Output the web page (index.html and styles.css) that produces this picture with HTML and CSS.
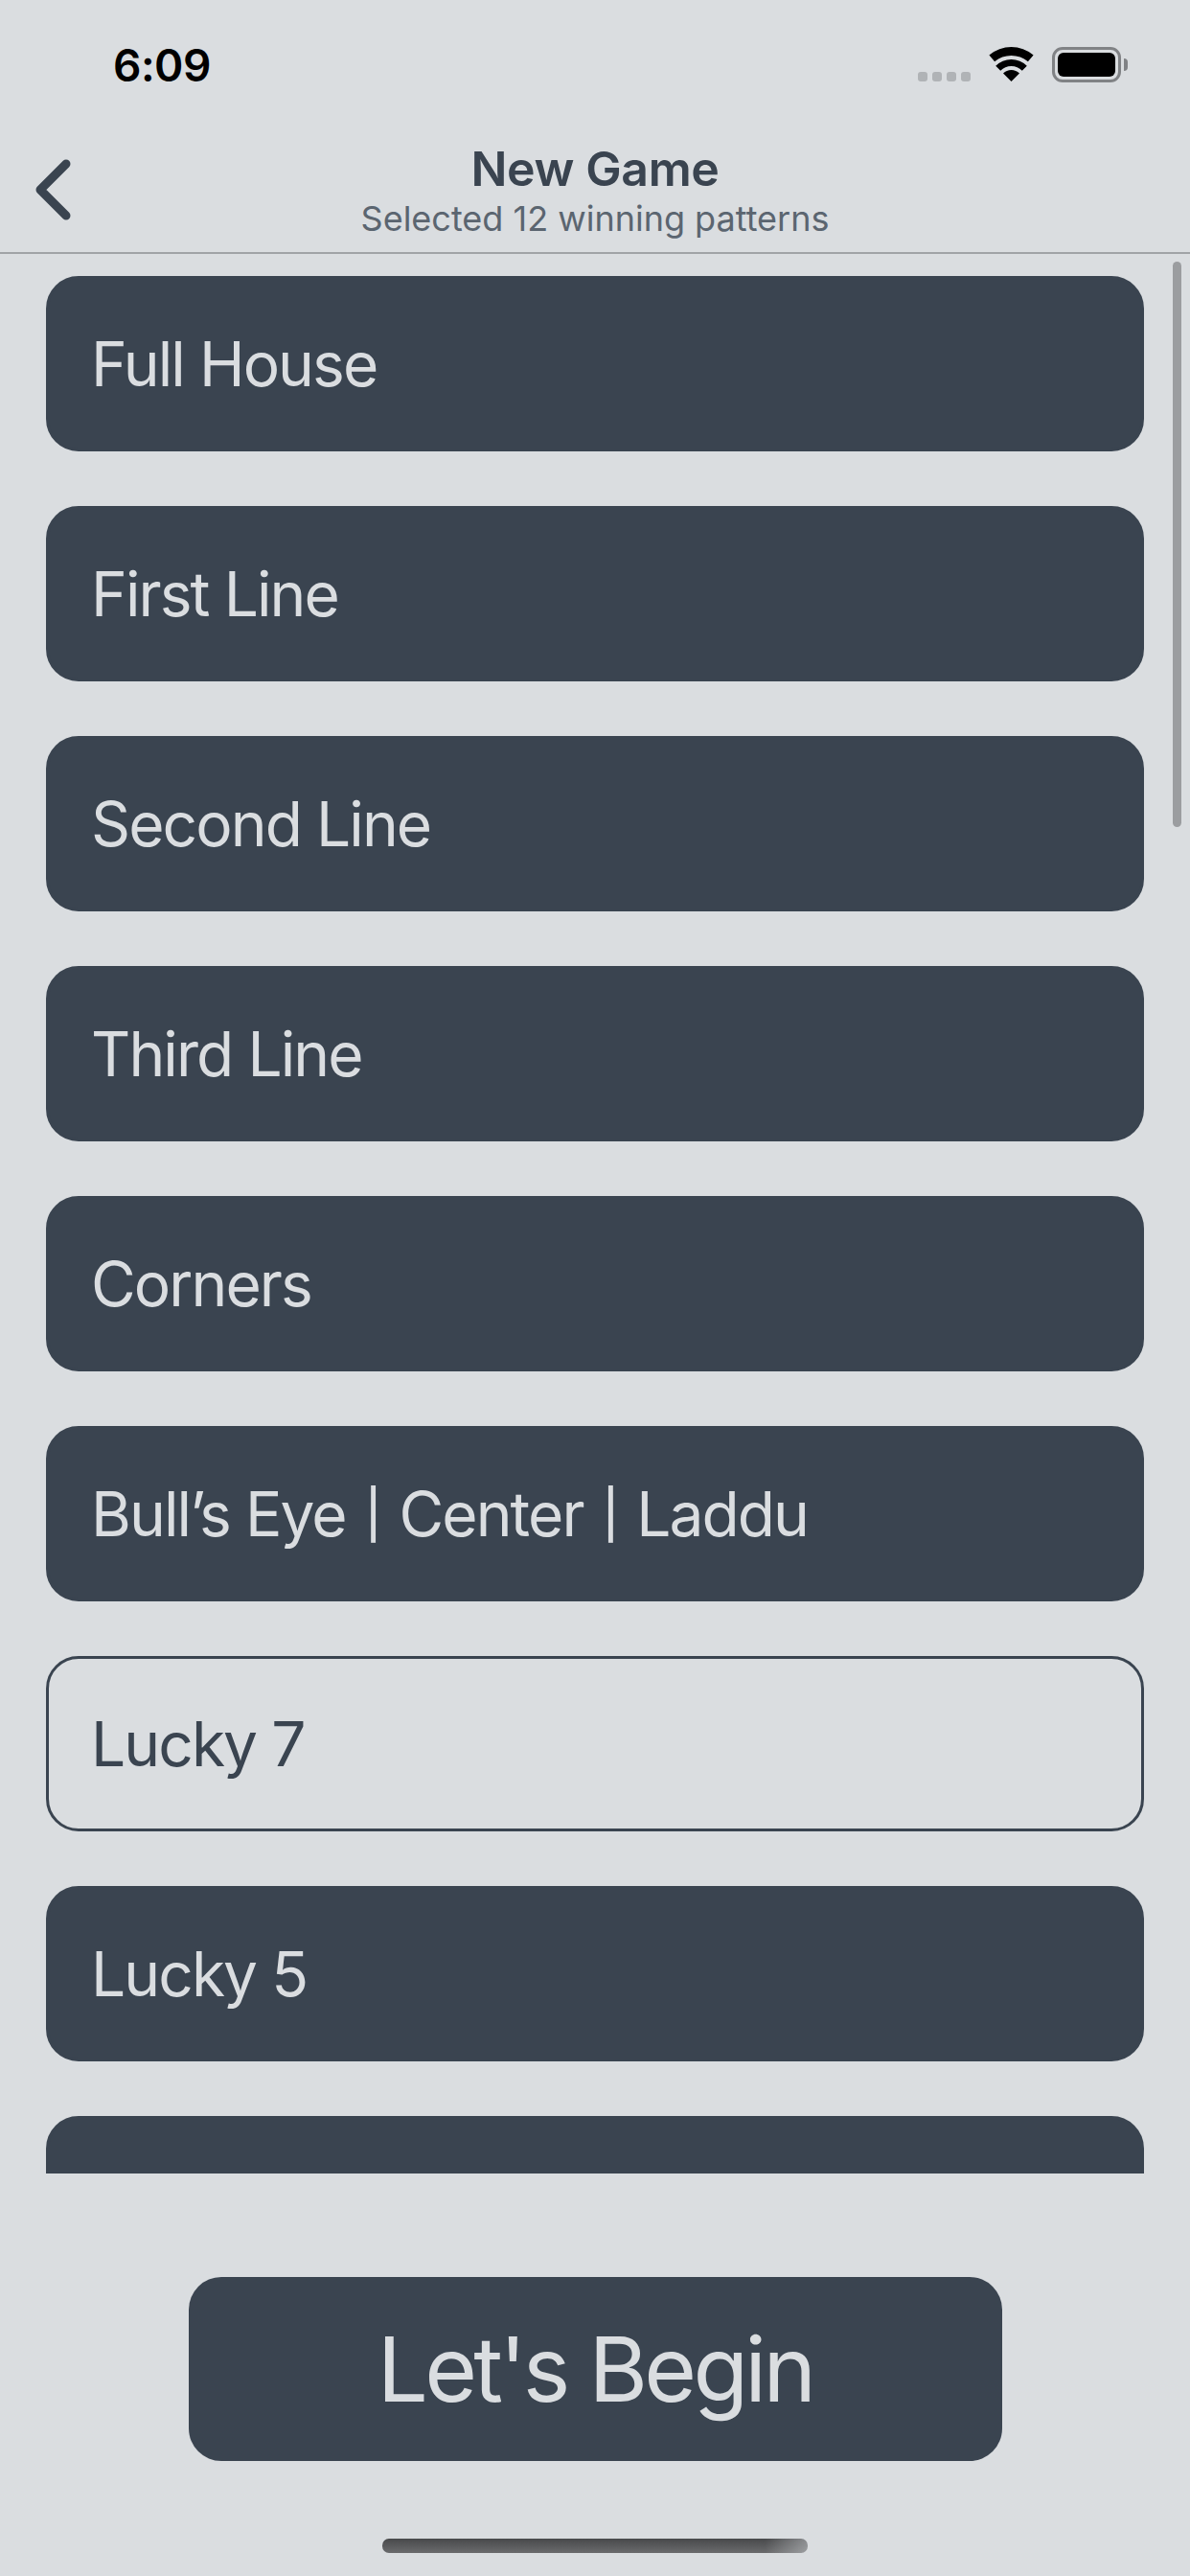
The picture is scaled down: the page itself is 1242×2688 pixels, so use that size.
FILE: index.html
```html
<!DOCTYPE html>
<html lang="en">
<head>
    <meta charset="UTF-8">
    <meta name="viewport" content="width=device-width, initial-scale=1.0">
    <title>New Game</title>
    <link rel="stylesheet" href="styles.css">
</head>
<body>
    <div class="status-bar">
        <div class="time">6:09</div>
        <div class="status-icons">
            <div class="signal">
                <span class="dot"></span>
                <span class="dot"></span>
                <span class="dot"></span>
                <span class="dot"></span>
            </div>
            <svg class="wifi" width="47" height="36" viewBox="0 0 47 36">
                <path d="M23.5 36L15 27.5A12 12 0 0 1 32 27.5Z"/>
                <path d="M12.2 24.7L7.2 19.7A23 23 0 0 1 39.8 19.7L34.8 24.7A16 16 0 0 0 12.2 24.7Z"/>
                <path d="M6.1 15.3L0.4 8.4A36 36 0 0 1 46.6 8.4L40.9 15.3A27 27 0 0 0 6.1 15.3Z"/>
            </svg>
            <div class="battery">
                <div class="battery-body"><div class="battery-fill"></div></div>
                <div class="battery-nub"></div>
            </div>
        </div>
    </div>

    <div class="nav">
        <svg class="back" width="40" height="66" viewBox="0 0 40 66">
            <path d="M32 6L5 33L32 60"/>
        </svg>
        <div class="nav-title">
            <div class="heading">New Game</div>
            <div class="subheading">Selected 12 winning patterns</div>
        </div>
    </div>

    <div class="list-wrap">
        <div class="list">
            <div class="row">Full House</div>
            <div class="row">First Line</div>
            <div class="row">Second Line</div>
            <div class="row">Third Line</div>
            <div class="row">Corners</div>
            <div class="row">Bull’s Eye <span class="sep">|</span> Center <span class="sep">|</span> Laddu</div>
            <div class="row outline">Lucky 7</div>
            <div class="row">Lucky 5</div>
            <div class="row"></div>
        </div>
        <div class="scrollbar"></div>
    </div>

    <div class="footer">
        <div class="begin">Let's Begin</div>
    </div>

    <div class="home-wrap">
        <div class="home-bar"></div>
    </div>
</body>
</html>
```

FILE: styles.css
```css
* {
    box-sizing: border-box;
}

body {
    font-family: Inter, "Liberation Sans", sans-serif;
    background-color: #dadde0;
    color: #3a4450;
    margin: 0;
    width: 1242px;
    height: 2688px;
    overflow: hidden;
    display: flex;
    flex-direction: column;
}

.status-bar {
    flex: none;
    height: 132px;
    padding: 44px 65px 0 118px;
    display: flex;
    justify-content: space-between;
    align-items: flex-start;
}

.time {
    font-size: 46px;
    font-weight: 600;
    letter-spacing: -0.5px;
    line-height: 48px;
    color: #000;
}

.status-icons {
    display: flex;
    align-items: flex-start;
    padding-top: 5px;
}

.signal {
    display: flex;
    gap: 5px;
    margin-top: 26px;
    margin-right: 19px;
}

.dot {
    width: 10px;
    height: 10px;
    border-radius: 3px;
    background: #b0b3b6;
}

.wifi {
    fill: #000;
    margin-right: 19px;
}

.battery {
    display: flex;
    align-items: center;
}

.battery-body {
    width: 72px;
    height: 37px;
    border: 3px solid #808285;
    border-radius: 11px;
    padding: 3px;
}

.battery-fill {
    height: 100%;
    background: #000;
    border-radius: 6px;
}

.battery-nub {
    width: 4px;
    height: 13px;
    margin-left: 3px;
    background: #808285;
    border-radius: 0 4px 4px 0;
}

.nav {
    flex: none;
    height: 133px;
    border-bottom: 2px solid #a0a3a6;
    position: relative;
    display: flex;
    justify-content: center;
}

.back {
    position: absolute;
    left: 37px;
    top: 33px;
    fill: none;
    stroke: #3a4450;
    stroke-width: 9;
    stroke-linecap: round;
    stroke-linejoin: round;
}

.nav-title {
    text-align: center;
}

.heading {
    font-size: 50px;
    font-weight: 600;
    line-height: 60px;
    margin-top: 14px;
    letter-spacing: -0.4px;
}

.subheading {
    font-size: 36px;
    line-height: 44px;
    color: #5b6570;
}

.list-wrap {
    flex: none;
    height: 2003px;
    position: relative;
    overflow: hidden;
}

.list {
    padding: 23px 48px 0;
    display: flex;
    flex-direction: column;
    gap: 57px;
}

.row {
    flex: none;
    height: 183px;
    border: 3px solid #3a4450;
    border-radius: 34px;
    background: #3a4450;
    color: #dadde0;
    padding-left: 44px;
    font-size: 64px;
    letter-spacing: -1.9px;
    line-height: 177px;
}

.row.outline {
    background: transparent;
    color: #3a4450;
}

/* the pipe in this font is too tall next to the caps */
.sep {
    font-size: 50px;
    font-weight: 500;
    vertical-align: 5px;
    margin: 0 4px;
}

.scrollbar {
    position: absolute;
    left: 1224px;
    top: 8px;
    width: 9px;
    height: 590px;
    border-radius: 5px;
    background: #9b9da0;
}

.footer {
    flex: none;
    padding-top: 108px;
    display: flex;
    justify-content: center;
}

.begin {
    width: 849px;
    height: 192px;
    border-radius: 34px;
    background: #3a4450;
    color: #dadde0;
    text-align: center;
    font-size: 94px;
    letter-spacing: -3.7px;
    line-height: 192px;
}

.home-wrap {
    flex: none;
    padding-top: 81px;
    display: flex;
    justify-content: center;
}

.home-bar {
    width: 444px;
    height: 15px;
    border-radius: 7px;
    background: linear-gradient(90deg, rgba(218, 221, 224, 0) 90%, rgba(218, 221, 224, 0.45)), linear-gradient(180deg, #48494b, #6a6b6d);
}
```
